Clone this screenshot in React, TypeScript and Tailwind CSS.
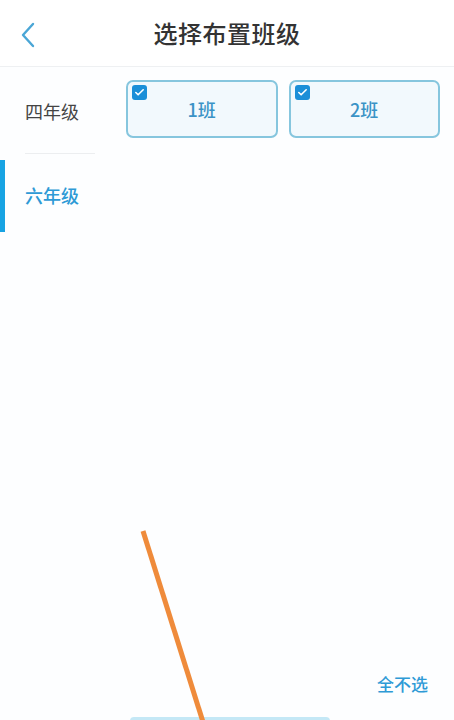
import { Check } from 'lucide-react'

const grades = [
  { name: '四年级', active: false },
  { name: '六年级', active: true },
]

const classes = ['1班', '2班']

export default function App() {
  return (
    <div
      className="relative w-[454px] h-[720px] overflow-hidden bg-[#fdfeff] flex flex-col"
      style={{ fontFamily: '"Noto Sans CJK SC", "Liberation Sans", sans-serif' }}
    >
      {/* 顶部导航 */}
      <div className="h-[67px] shrink-0 flex items-center relative border-b border-[#eef0f2] bg-white">
        <svg className="absolute left-[18px] top-[21px]" width="20" height="28" viewBox="0 0 20 28" fill="none">
          <path d="M15 3 L5 14 L15 25" stroke="#4aa6d6" strokeWidth="2.4" strokeLinecap="round" strokeLinejoin="round" />
        </svg>
        <h1 className="w-full text-center text-[24px] font-medium text-[#333] tracking-[0.5px]">选择布置班级</h1>
      </div>

      <div className="flex flex-1">
        {/* 年级列表 */}
        <div className="w-[110px] shrink-0 pt-[2px]">
          {grades.map((g, i) => (
            <div key={g.name} className="relative h-[84px] flex items-center">
              {g.active && <div className="absolute left-0 top-[7px] w-[5px] h-[72px] bg-[#17a3e3]" />}
              <span className={`pl-[25px] text-[18px] ${g.active ? 'text-[#2e9ad6] font-medium' : 'text-[#444]'}`}>
                {g.name}
              </span>
              {i === 0 && <div className="absolute left-[25px] bottom-[-1px] w-[70px] h-px bg-[#eceef0]" />}
            </div>
          ))}
        </div>

        {/* 班级选择 */}
        <div className="flex-1 pt-[13px] pl-[16px] pr-[14px]">
          <div className="grid grid-cols-2 gap-[11px]">
            {classes.map((c) => (
              <div
                key={c}
                className="relative h-[58px] rounded-[7px] border-2 border-[#86c6de] bg-[#f2f9fd] flex items-center justify-center"
              >
                <div className="absolute left-[4px] top-[3px] w-[15px] h-[15px] rounded-[3px] bg-[#1b8fd8] flex items-center justify-center">
                  <Check size={11} strokeWidth={3.5} color="#fff" />
                </div>
                <span className="text-[18px] text-[#3a93c6] font-medium">{c}</span>
              </div>
            ))}
          </div>
        </div>
      </div>

      {/* 底部操作 */}
      <div className="absolute right-[26px] top-[671px] text-[17px] font-medium text-[#2e9ad6]">全不选</div>
      <div className="absolute left-[130px] top-[717px] w-[200px] h-[6px] rounded-t-[4px] bg-[#c4e8f6]" />

      {/* 标注线 */}
      <svg className="absolute left-0 top-0 pointer-events-none" width="454" height="720">
        <line x1="143" y1="531" x2="203" y2="722" stroke="#ef8b3b" strokeWidth="5" />
      </svg>
    </div>
  )
}
